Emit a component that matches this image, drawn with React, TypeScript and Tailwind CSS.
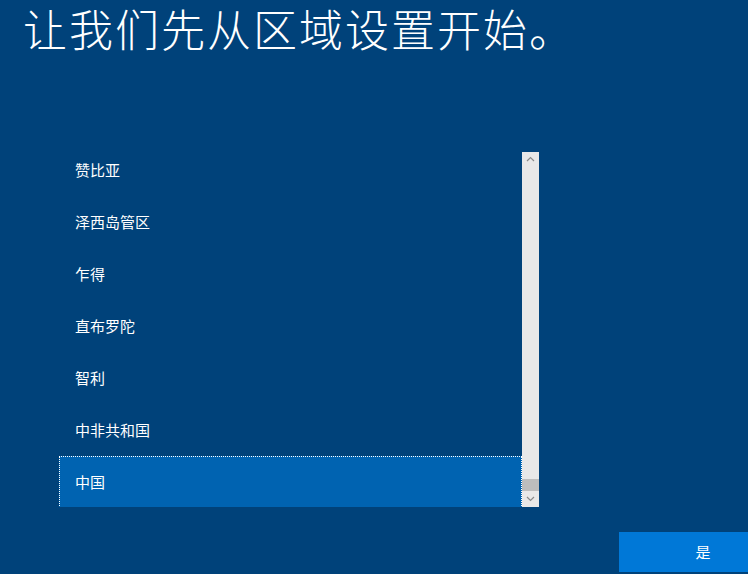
const regions = ["赞比亚", "泽西岛管区", "乍得", "直布罗陀", "智利", "中非共和国", "中国"];

const App = () => {
  const selected = "中国";

  return (
    <div
      className="w-[748px] h-[574px] overflow-hidden bg-[#00427a] text-white"
      style={{ fontFamily: '"Noto Sans CJK SC", "Noto Sans", sans-serif' }}
    >
      <h1 className="pl-[23px] text-[44px] leading-[56px] font-light tracking-[2px] whitespace-nowrap">
        让我们先从区域设置开始。
      </h1>
      <div className="ml-[59px] mt-[96px] flex h-[355px] w-[480px]">
        <div className="w-[463px] h-full overflow-hidden">
          <div className="-mt-[8px]">
            {regions.map((name) => (
              <div
                key={name}
                className={
                  name === selected
                    ? "h-[52px] flex items-center pl-[15px] text-[15px] bg-[#0063b1] border border-dotted border-white"
                    : "h-[52px] flex items-center pl-[16px] text-[15px]"
                }
              >
                {name}
              </div>
            ))}
          </div>
        </div>
        <div className="w-[17px] h-full bg-[#e8e8e8] flex flex-col items-center">
          <svg width="9" height="6" viewBox="0 0 9 6" className="mt-[4px]">
            <path d="M1 5 L4.5 1.5 L8 5" stroke="#8a8a8a" strokeWidth="1.2" fill="none" />
          </svg>
          <div className="flex-1" />
          <div className="w-full h-[12px] bg-[#bdbdbd]" />
          <svg width="9" height="6" viewBox="0 0 9 6" className="mt-[5px] mb-[5px]">
            <path d="M1 1 L4.5 4.5 L8 1" stroke="#8a8a8a" strokeWidth="1.2" fill="none" />
          </svg>
        </div>
      </div>
      <button className="block ml-[619px] mt-[25px] w-[168px] h-[40px] bg-[#0078d7] text-[15px] text-white">
        是
      </button>
    </div>
  );
};

export default App;
